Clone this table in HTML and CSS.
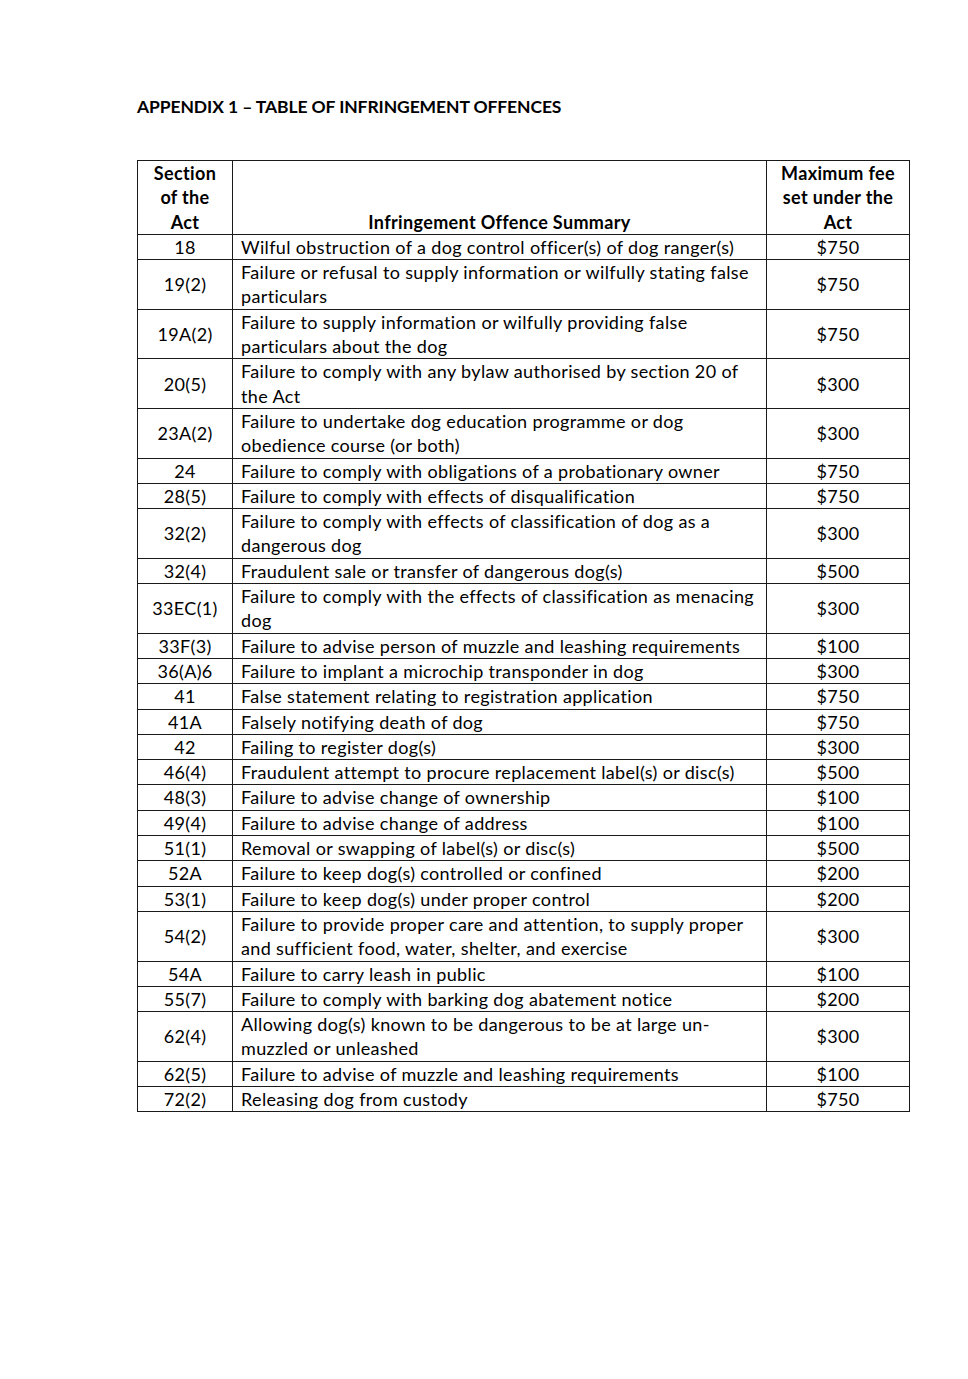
FILE: index.html
```html
<!DOCTYPE html>
<html lang="en">
<head>
<meta charset="utf-8">
<title>Appendix 1 – Table of Infringement Offences</title>
<link rel="stylesheet" href="styles.css">
</head>
<body>
<main class="page">
  <h1 class="title">APPENDIX 1 – TABLE OF INFRINGEMENT OFFENCES</h1>
  <table class="offences">
    <colgroup>
      <col class="col-section">
      <col class="col-summary">
      <col class="col-fee">
    </colgroup>
    <thead>
      <tr>
        <th class="c">Section<br>of the<br>Act</th>
        <th class="c bottom">Infringement Offence Summary</th>
        <th class="c">Maximum fee<br>set under the<br>Act</th>
      </tr>
    </thead>
    <tbody>
      <tr><td class="c">18</td><td>Wilful obstruction of a dog control officer(s) of dog ranger(s)</td><td class="c">$750</td></tr>
      <tr><td class="c">19(2)</td><td>Failure or refusal to supply information or wilfully stating false<br>particulars</td><td class="c">$750</td></tr>
      <tr><td class="c">19A(2)</td><td>Failure to supply information or wilfully providing false<br>particulars about the dog</td><td class="c">$750</td></tr>
      <tr><td class="c">20(5)</td><td>Failure to comply with any bylaw authorised by section 20 of<br>the Act</td><td class="c">$300</td></tr>
      <tr><td class="c">23A(2)</td><td>Failure to undertake dog education programme or dog<br>obedience course (or both)</td><td class="c">$300</td></tr>
      <tr><td class="c">24</td><td>Failure to comply with obligations of a probationary owner</td><td class="c">$750</td></tr>
      <tr><td class="c">28(5)</td><td>Failure to comply with effects of disqualification</td><td class="c">$750</td></tr>
      <tr><td class="c">32(2)</td><td>Failure to comply with effects of classification of dog as a<br>dangerous dog</td><td class="c">$300</td></tr>
      <tr><td class="c">32(4)</td><td>Fraudulent sale or transfer of dangerous dog(s)</td><td class="c">$500</td></tr>
      <tr><td class="c">33EC(1)</td><td>Failure to comply with the effects of classification as menacing<br>dog</td><td class="c">$300</td></tr>
      <tr><td class="c">33F(3)</td><td>Failure to advise person of muzzle and leashing requirements</td><td class="c">$100</td></tr>
      <tr><td class="c">36(A)6</td><td>Failure to implant a microchip transponder in dog</td><td class="c">$300</td></tr>
      <tr><td class="c">41</td><td>False statement relating to registration application</td><td class="c">$750</td></tr>
      <tr><td class="c">41A</td><td>Falsely notifying death of dog</td><td class="c">$750</td></tr>
      <tr><td class="c">42</td><td>Failing to register dog(s)</td><td class="c">$300</td></tr>
      <tr><td class="c">46(4)</td><td>Fraudulent attempt to procure replacement label(s) or disc(s)</td><td class="c">$500</td></tr>
      <tr><td class="c">48(3)</td><td>Failure to advise change of ownership</td><td class="c">$100</td></tr>
      <tr><td class="c">49(4)</td><td>Failure to advise change of address</td><td class="c">$100</td></tr>
      <tr><td class="c">51(1)</td><td>Removal or swapping of label(s) or disc(s)</td><td class="c">$500</td></tr>
      <tr><td class="c">52A</td><td>Failure to keep dog(s) controlled or confined</td><td class="c">$200</td></tr>
      <tr><td class="c">53(1)</td><td>Failure to keep dog(s) under proper control</td><td class="c">$200</td></tr>
      <tr><td class="c">54(2)</td><td>Failure to provide proper care and attention, to supply proper<br>and sufficient food, water, shelter, and exercise</td><td class="c">$300</td></tr>
      <tr><td class="c">54A</td><td>Failure to carry leash in public</td><td class="c">$100</td></tr>
      <tr><td class="c">55(7)</td><td>Failure to comply with barking dog abatement notice</td><td class="c">$200</td></tr>
      <tr><td class="c">62(4)</td><td>Allowing dog(s) known to be dangerous to be at large un-<br>muzzled or unleashed</td><td class="c">$300</td></tr>
      <tr><td class="c">62(5)</td><td>Failure to advise of muzzle and leashing requirements</td><td class="c">$100</td></tr>
      <tr><td class="c">72(2)</td><td>Releasing dog from custody</td><td class="c">$750</td></tr>
    </tbody>
  </table>
</main>
</body>
</html>
```

FILE: styles.css
```css
html, body {
  margin: 0;
  padding: 0;
  background: #ffffff;
}

.page {
  padding: 96px 0 0 137px;
  font-family: Lato, "Open Sans", "Liberation Sans", sans-serif;
  color: #000;
}

.title {
  margin: 0 0 42px 0;
  font-size: 17.5px;
  font-weight: 700;
  line-height: 22px;
  letter-spacing: -0.1px;
}

.offences {
  border-collapse: collapse;
  table-layout: fixed;
  width: 772px;
  font-size: 18px;
  letter-spacing: 0.35px;
  line-height: 24.3px;
}

.col-section { width: 95px; }
.col-summary { width: 534px; }
.col-fee { width: 143px; }

.offences th,
.offences td {
  border: 1px solid #1a1a1a;
  padding: 0 8px;
  vertical-align: middle;
  text-align: left;
  white-space: nowrap;
}

.offences th {
  font-weight: 700;
}

.offences .c {
  text-align: center;
  padding: 0 4px;
}

.offences .bottom {
  vertical-align: bottom;
}
```
